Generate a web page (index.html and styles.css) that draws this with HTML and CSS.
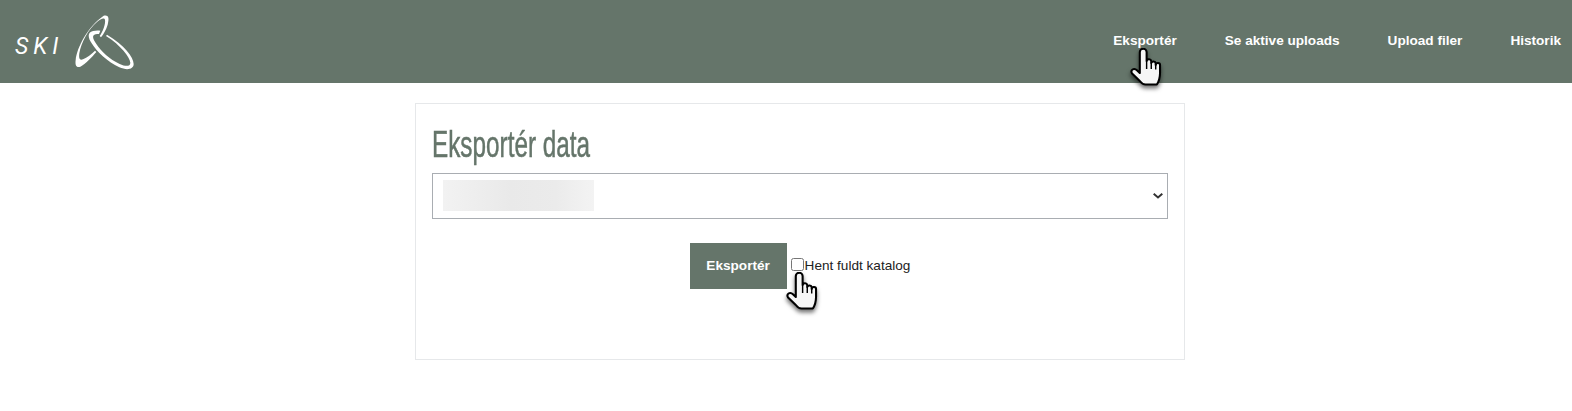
FILE: index.html
```html
<!DOCTYPE html>
<html lang="da">
  <head>
    <meta charset="UTF-8" />
    <title>Eksportér data</title>
    <link rel="stylesheet" href="styles.css">
  </head>

  <body>
    <svg class="defs" width="0" height="0">
      <symbol id="hand" viewBox="0 0 31 38" preserveAspectRatio="none">
        <path fill="#f6f6f6" stroke="#000" stroke-width="2" stroke-linejoin="round" d="M9.500 4a3.300 3.300 0 0 1 6.600 0V13a2.300 2.300 0 0 1 4.500 .3V15a2.200 2.200 0 0 1 4.300 .3V17a2.100 2.100 0 0 1 4.200 .3V25Q29 32 26 36.500H15Q12 36.500 9.500 33L2 25.500Q.5 23 2.500 21.500Q4.500 20 7 22.500L9.500 25Z" />
        <path fill="none" stroke="#000" stroke-width="1.400" d="M16.100 13V21M20.600 14.500V21M24.900 16V21.500" />
      </symbol>
    </svg>

    <header class="topbar">
      <a class="brand">
        <span class="brand-name">SKI</span>
        <svg class="brand-mark" width="64" height="58" viewBox="0 0 192 174">
          <g fill="#fff">
            <path d="M98 11C112 8 116 16 110 38C106 52 98 66 90 76L86 72C96 58 104 36 102 24C100 16 90 20 78 30C52 52 30 92 25 124C23 140 26 146 36 142C48 137 62 126 72 116L76 120C62 136 44 156 28 164C16 168 12 160 14 144C18 106 50 44 98 11Z" />
            <path d="M88 56C78 54 62 56 56 62C50 70 54 82 62 94C78 120 110 150 145 166C168 176 188 172 188 156C188 134 160 100 108 68L105 72C150 100 176 136 178 152C178 164 164 164 146 156C116 142 90 118 76 96C68 84 62 74 70 68C74 65 80 66 84 66Z" />
          </g>
        </svg>
      </a>
      <nav class="nav">
        <a class="nav-link">Eksportér</a>
        <a class="nav-link">Se aktive uploads</a>
        <a class="nav-link">Upload filer</a>
        <a class="nav-link">Historik</a>
      </nav>
      <svg class="hand hand-nav" width="32" height="38"><use href="#hand" /></svg>
    </header>

    <main class="content">
      <section class="card">
        <h1 class="card-title">Eksportér data</h1>
        <div class="select-wrap">
          <select class="catalog-select">
            <option></option>
          </select>
          <span class="redacted"></span>
          <svg class="chevron" width="10" height="6" viewBox="0 0 10 6">
            <path fill="none" stroke="#333" stroke-width="2" d="M.7 .8L5 4.500L9.300 .8" />
          </svg>
        </div>
        <div class="actions">
          <button class="btn" type="button">Eksportér</button>
          <label class="check">
            <input type="checkbox" />Hent fuldt katalog
          </label>
          <svg class="hand hand-check" width="32" height="38"><use href="#hand" /></svg>
        </div>
      </section>
    </main>
  </body>
</html>
```

FILE: styles.css
```css
body {
  margin: 0;
  background-color: white;
  font-family: "Liberation Sans", Arial, sans-serif;
  font-size: 13.600px;
  color: #222;
}

.defs {
  position: absolute;
}

.topbar {
  position: relative;
  height: 83px;
  display: flex;
  align-items: center;
  justify-content: space-between;
  background-color: #65756a;
}

.brand {
  display: flex;
  align-items: center;
  padding-left: 15px;
  color: white;
}
.brand-name {
  width: 56px;
  font-family: Roboto, sans-serif;
  font-size: 23px;
  font-style: italic;
  letter-spacing: 5px;
  margin-top: 10px;
}
.brand-mark {
  margin-top: -1px;
}

.nav {
  display: flex;
  column-gap: 48px;
  padding-right: 11px;
  margin-top: -2px;
}
.nav-link {
  color: white;
  font-weight: bold;
}

.hand {
  position: absolute;
  filter: drop-shadow(0 3px 2px rgba(0, 0, 0, 0.55));
}
.hand-nav {
  left: 1130px;
  top: 48px;
}
.hand-check {
  left: 354px;
  top: 29px;
}

.content {
  padding: 20px 0 0 28px;
}

.card {
  width: 736px;
  height: 255px;
  margin: 0 auto;
  padding: 0 16px;
  border: 1px solid #e6e8ea;
}

.card-title {
  margin: 21px 0 0;
  height: 48px;
  font-size: 36px;
  line-height: 40px;
  font-weight: normal;
  color: #65756a;
  -webkit-text-stroke: 0.5px #65756a;
  transform: scaleX(0.675);
  transform-origin: left;
}

.select-wrap {
  position: relative;
}
.catalog-select {
  display: block;
  width: 100%;
  height: 46px;
  appearance: none;
  background-color: white;
  border: 1px solid #a9adb2;
  border-radius: 0;
}
.redacted {
  position: absolute;
  left: 11px;
  top: 7px;
  width: 151px;
  height: 31px;
  background: linear-gradient(90deg, #f2f2f2, #e9e9e9 45%, #ebebeb 75%, #f3f3f3);
}
.chevron {
  position: absolute;
  right: 5px;
  top: 20px;
}

.actions {
  position: relative;
  display: flex;
  justify-content: center;
  align-items: center;
  margin-top: 24px;
}
.btn {
  width: 97px;
  height: 46px;
  padding: 0 0 2px;
  background-color: #65756a;
  border: 0;
  color: white;
  font-family: inherit;
  font-size: 13.600px;
  font-weight: bold;
}
.check {
  display: flex;
  align-items: center;
  margin-left: 4px;
  margin-top: -1px;
}
.check input {
  margin: -2px 1px 0 0;
  width: 13px;
  height: 13px;
}
```
